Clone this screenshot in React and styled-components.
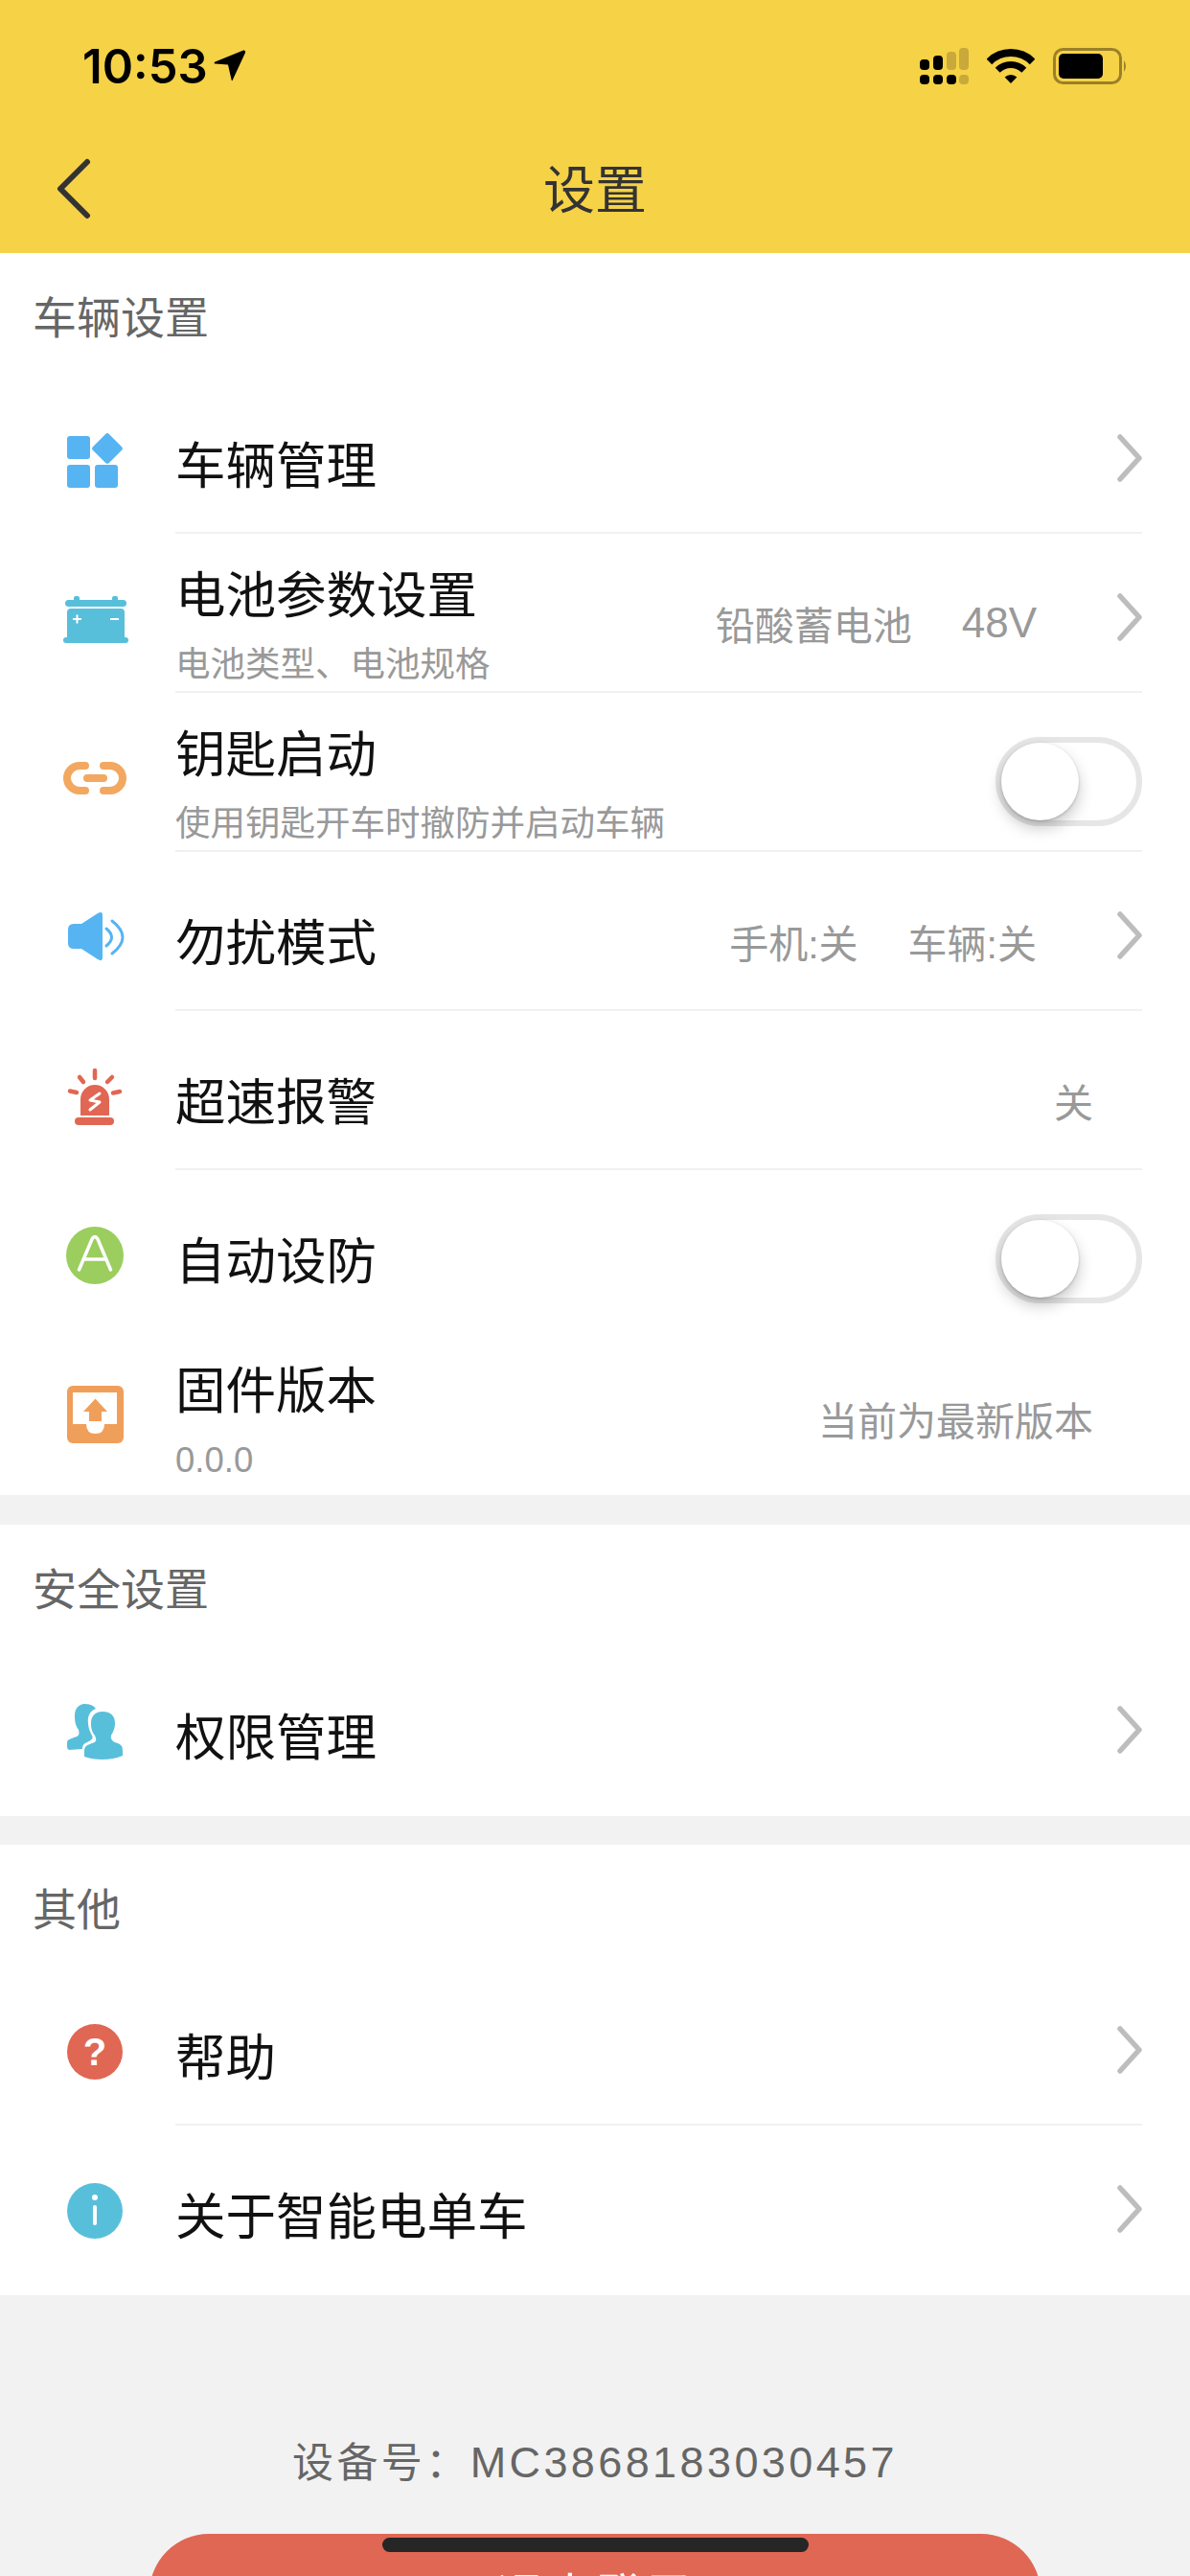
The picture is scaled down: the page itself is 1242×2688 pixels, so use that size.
import React from 'react';
import styled, { createGlobalStyle } from 'styled-components';

const GlobalStyle = createGlobalStyle`
  html, body {
    margin: 0;
    padding: 0;
    background: #f2f2f2;
  }
  * {
    box-sizing: border-box;
  }
`;

const Page = styled.div`
  position: relative;
  width: 1242px;
  height: 2688px;
  overflow: hidden;
  background: #f2f2f2;
  font-family: "Liberation Sans", "Noto Sans CJK SC", sans-serif;
`;

const Header = styled.header`
  background: #f6d246;
`;

const StatusBar = styled.div`
  height: 138px;
  padding: 0 65px 0 86px;
  display: flex;
  align-items: center;
  justify-content: space-between;
`;

const Clock = styled.div`
  display: flex;
  align-items: center;
  gap: 6px;
  font-family: Inter, sans-serif;
  font-size: 49px;
  font-weight: 600;
  color: #000;
`;

const StatusIcons = styled.div`
  display: flex;
  align-items: center;
  gap: 19px;
`;

const NavBar = styled.div`
  position: relative;
  height: 126px;
  display: flex;
  align-items: center;
  justify-content: center;
`;

const BackButton = styled.button`
  position: absolute;
  left: 58px;
  top: 27px;
  padding: 0;
  border: 0;
  background: none;
  display: flex;
`;

const NavTitle = styled.h1`
  margin: 0 0 14px;
  font-size: 54px;
  font-weight: 400;
  color: #333;
`;

const Section = styled.section`
  background: #fff;
  padding-bottom: ${(p) => p.$bottom}px;
  margin-bottom: ${(p) => p.$gap || 0}px;
`;

const SectionTitle = styled.div`
  height: 127px;
  padding-left: 34px;
  display: flex;
  align-items: center;
  font-size: 46px;
  color: #666;
`;

const RowBox = styled.div`
  height: 166px;
  display: flex;
`;

const IconCell = styled.div`
  width: 183px;
  flex: none;
  padding: 12px 0 0 65px;
  display: flex;
  align-items: center;
`;

const Icon = styled.svg`
  width: 68px;
  height: 68px;
  overflow: visible;
  display: block;
`;

const Body = styled.div`
  flex: 1;
  margin-right: 50px;
  padding-top: 28px;
  display: flex;
  align-items: center;
  justify-content: space-between;
  border-bottom: 2px solid ${(p) => (p.$line ? '#f1f1f1' : 'transparent')};
`;

const Labels = styled.div`
  margin-top: ${(p) => (p.$double ? 10 : 0)}px;
`;

const Label = styled.div`
  font-size: 52.5px;
  line-height: 66px;
  color: #111;
`;

const SubLabel = styled.div`
  margin-top: 6px;
  font-size: 36.5px;
  line-height: 66px;
  color: #999;
`;

const Trailing = styled.div`
  display: flex;
  align-items: center;
  padding-right: ${(p) => (p.$plain ? 51 : 0)}px;
`;

const Value = styled.span`
  margin-bottom: 6px;
  font-size: ${(p) => (p.$latin ? 44 : 41)}px;
  color: #999;
  & + & {
    margin-left: 52px;
  }
`;

const ChevronIcon = styled.svg`
  width: 28px;
  height: 50px;
  margin: 0 0 18px 82px;
  display: block;
`;

const ToggleTrack = styled.div`
  width: 153px;
  height: 93px;
  margin-bottom: 8px;
  border: 6px solid #e6e6e6;
  border-radius: 47px;
  background: #fff;
  display: flex;
  align-items: center;
`;

const ToggleThumb = styled.div`
  width: 81px;
  height: 81px;
  border-radius: 50%;
  background: #fff;
  box-shadow: 0 8px 16px rgba(0, 0, 0, 0.22), 0 1px 3px rgba(0, 0, 0, 0.2);
`;

const DeviceNumber = styled.div`
  margin-top: 145px;
  height: 60px;
  line-height: 60px;
  text-align: center;
  font-size: 45px;
  letter-spacing: 3.4px;
  color: #666;
`;

const DevicePrefix = styled.span`
  font-size: 43px;
`;

const LogoutButton = styled.button`
  display: flex;
  align-items: center;
  justify-content: center;
  width: 930px;
  height: 124px;
  margin: 44px auto 0;
  border: 0;
  border-radius: 62px;
  background: #e06753;
  color: #fff;
  font-family: inherit;
  font-size: 52px;
`;

const HomeIndicator = styled.div`
  position: absolute;
  left: 399px;
  top: 2648px;
  width: 445px;
  height: 15px;
  border-radius: 8px;
  background: #262626;
`;

const Chevron = () => (
  <ChevronIcon viewBox="0 0 28 50" fill="none">
    <path d="M5 3 L25 25 L5 47" stroke="#bdbdbd" strokeWidth="5.5" strokeLinecap="round" strokeLinejoin="round" />
  </ChevronIcon>
);

const Toggle = () => (
  <ToggleTrack>
    <ToggleThumb />
  </ToggleTrack>
);

const Row = ({ icon, label, sub, line, children }) => (
  <RowBox>
    <IconCell>{icon}</IconCell>
    <Body $line={line}>
      <Labels $double={!!sub}>
        <Label>{label}</Label>
        {sub && <SubLabel>{sub}</SubLabel>}
      </Labels>
      {children}
    </Body>
  </RowBox>
);

const SignalIcon = () => (
  <svg width="51" height="38" viewBox="0 0 51 38">
    <g fill="#000">
      <rect x="0" y="12" width="10" height="11" rx="4" />
      <rect x="14" y="8" width="10" height="15" rx="4" />
      <rect x="0" y="28" width="10" height="10" rx="4" />
      <rect x="14" y="28" width="10" height="10" rx="4" />
      <rect x="28" y="28" width="10" height="10" rx="4" />
    </g>
    <g fill="#c9a93a">
      <rect x="28" y="4" width="10" height="19" rx="4" />
      <rect x="41" y="0" width="10" height="23" rx="4" />
      <rect x="41" y="28" width="10" height="10" rx="4" />
    </g>
  </svg>
);

const WifiIcon = () => (
  <svg width="50" height="38" viewBox="0 0 50 38" fill="none">
    <path d="M2.4 14.4 A32 32 0 0 1 47.6 14.4" stroke="#000" strokeWidth="8" />
    <path d="M11.2 23.2 A19.5 19.5 0 0 1 38.8 23.2" stroke="#000" strokeWidth="7" />
    <path d="M25 37 L18.6 30.6 A9 9 0 0 1 31.4 30.6 Z" fill="#000" />
  </svg>
);

const BatteryIcon = () => (
  <svg width="78" height="38" viewBox="0 0 78 38">
    <rect x="1.5" y="1.5" width="69" height="35" rx="9" fill="none" stroke="#9a8029" strokeWidth="3" />
    <rect x="6" y="6" width="46" height="26" rx="5" fill="#000" />
    <path d="M74 13 Q78 19 74 25 Z" fill="#9a8029" />
  </svg>
);

const ArrowIcon = () => (
  <svg width="34" height="34" viewBox="0 0 34 34">
    <path d="M31 0.5 Q33.5 0 33 3 L20 31 Q19 33.5 18.5 31 L15 15.5 L1.5 14.5 Q-0.5 14 1.5 12.5 Z" fill="#000" />
  </svg>
);

const GridIcon = () => (
  <Icon viewBox="0 0 68 68">
    <g fill="#56b4f2">
      <rect x="5" y="9" width="24" height="24" rx="3" />
      <rect x="5" y="39" width="24" height="24" rx="3" />
      <rect x="34" y="39" width="24" height="24" rx="3" />
      <rect x="35" y="10" width="24" height="24" rx="3" transform="rotate(45 47 22)" />
    </g>
  </Icon>
);

const BatteryRowIcon = () => (
  <Icon viewBox="0 0 68 68">
    <g fill="#58bfdb">
      <rect x="12" y="10" width="6" height="7" rx="2" />
      <rect x="52" y="10" width="6" height="7" rx="2" />
      <rect x="3" y="14" width="64" height="7" rx="3.5" />
      <rect x="5" y="23" width="60" height="34" rx="4" />
      <rect x="1" y="53" width="68" height="6" rx="3" />
    </g>
    <path d="M11 34 H20 M15.5 29.5 V38.5 M50 34 H59" stroke="#fff" strokeWidth="2" />
  </Icon>
);

const LinkIcon = () => (
  <Icon viewBox="0 0 68 68" fill="none">
    <g stroke="#f2a860" strokeWidth="8" strokeLinecap="round">
      <path d="M24 21 H18 A13 13 0 0 0 18 47 H24" />
      <path d="M43 21 H50 A13 13 0 0 1 50 47 H43" />
      <path d="M26 34 H43" />
    </g>
  </Icon>
);

const SpeakerIcon = () => (
  <Icon viewBox="0 0 68 68" fill="none">
    <path
      d="M12 21 H20 L37 10 Q42 7 42 12 V56 Q42 61 37 58 L20 47 H12 Q6 47 6 41 V27 Q6 21 12 21 Z"
      fill="#56b4f2"
      transform="translate(0 -1)"
    />
    <path d="M46 25 Q57 34 46 43 M52 17 Q74 34 52 51" stroke="#56b4f2" strokeWidth="3" strokeLinecap="round" />
  </Icon>
);

const AlarmIcon = () => (
  <Icon viewBox="0 0 68 68" fill="none">
    <path d="M19 54 V37 A15 15 0 0 1 49 37 V54 Z" fill="#e06753" />
    <rect x="13" y="56" width="41" height="8" rx="4" fill="#e06753" />
    <path
      d="M34 7 V15 M18 14 L22 19 M52 14 L47 19 M8 28.5 L15 30 M60 29 L53 30.5"
      stroke="#e06753"
      strokeWidth="4.5"
      strokeLinecap="round"
    />
    <path d="M39 31 L29 38 L39 40 L29 48" stroke="#fff" strokeWidth="3" strokeLinecap="round" strokeLinejoin="round" />
  </Icon>
);

const AutoIcon = () => (
  <Icon viewBox="0 0 68 68" fill="none">
    <circle cx="34" cy="34" r="30" fill="#9bce5e" />
    <path d="M17.5 49 L31 17 Q34 12 37 17 L50.5 49 M24 38 H44" stroke="#fff" strokeWidth="3.5" strokeLinecap="round" />
  </Icon>
);

const FirmwareIcon = () => (
  <Icon viewBox="0 0 68 68">
    <rect x="5" y="4" width="59" height="60" rx="6" fill="#f09f5b" />
    <path d="M11 11 H57 V44 H44 Q44 54 34.5 54 Q25 54 25 44 H11 Z" fill="#fff" />
    <path d="M34.5 17.5 L47 31 H41 V41 H28 V31 H22 Z" fill="#f09f5b" />
  </Icon>
);

const UsersIcon = () => (
  <Icon viewBox="0 0 68 68">
    <path
      d="M13 17 C13 9 18 5 24 5 C29 5 33 7 35 10 C29 12 26 18 27 25 C27 30 29 34 31 38 C33 41 30 43 26 45 C24 46 21 47 21 52 L7 53 Q5 52 5 50 V46 C5 42 8 42 12 40 C18 39 18 36 17 32 C14 28 13 24 13 17 Z"
      fill="#58bfdb"
    />
    <path
      d="M30 25 C30 17 35 13 42 13 C50 13 55 17 55 25 C55 31 53 34 51 38 C50 42 53 45 58 46 C62 48 63 49 63 55 V59 C52 64 34 64 23 60 V54 C23 49 26 48 31 46 C36 45 36 42 34 38 C31 34 30 31 30 25 Z"
      fill="#58bfdb"
      stroke="#fff"
      strokeWidth="2"
      paintOrder="stroke"
    />
  </Icon>
);

const HelpIcon = () => (
  <Icon viewBox="0 0 68 68">
    <circle cx="34" cy="34" r="29" fill="#e06753" />
    <text x="34" y="48" textAnchor="middle" fontFamily="Liberation Sans, sans-serif" fontWeight="700" fontSize="40" fill="#fff">
      ?
    </text>
  </Icon>
);

const InfoIcon = () => (
  <Icon viewBox="0 0 68 68">
    <circle cx="34" cy="34" r="29" fill="#58bfdb" />
    <circle cx="34" cy="20" r="3" fill="#fff" />
    <rect x="32" y="28" width="4" height="21" rx="2" fill="#fff" />
  </Icon>
);

const App = () => (
  <Page>
    <GlobalStyle />
    <Header>
      <StatusBar>
        <Clock>
          10:53
          <ArrowIcon />
        </Clock>
        <StatusIcons>
          <SignalIcon />
          <WifiIcon />
          <BatteryIcon />
        </StatusIcons>
      </StatusBar>
      <NavBar>
        <BackButton>
          <svg width="37" height="64" viewBox="0 0 37 64" fill="none">
            <path d="M33 4 L5 32 L33 60" stroke="#333" strokeWidth="6" strokeLinecap="round" strokeLinejoin="round" />
          </svg>
        </BackButton>
        <NavTitle>设置</NavTitle>
      </NavBar>
    </Header>

    <Section $bottom={7} $gap={31}>
      <SectionTitle>车辆设置</SectionTitle>
      <Row icon={<GridIcon />} label="车辆管理" line>
        <Trailing>
          <Chevron />
        </Trailing>
      </Row>
      <Row icon={<BatteryRowIcon />} label="电池参数设置" sub="电池类型、电池规格" line>
        <Trailing>
          <Value>铅酸蓄电池</Value>
          <Value $latin>48V</Value>
          <Chevron />
        </Trailing>
      </Row>
      <Row icon={<LinkIcon />} label="钥匙启动" sub="使用钥匙开车时撤防并启动车辆" line>
        <Toggle />
      </Row>
      <Row icon={<SpeakerIcon />} label="勿扰模式" line>
        <Trailing>
          <Value>手机:关</Value>
          <Value>车辆:关</Value>
          <Chevron />
        </Trailing>
      </Row>
      <Row icon={<AlarmIcon />} label="超速报警" line>
        <Trailing $plain>
          <Value>关</Value>
        </Trailing>
      </Row>
      <Row icon={<AutoIcon />} label="自动设防">
        <Toggle />
      </Row>
      <Row icon={<FirmwareIcon />} label="固件版本" sub="0.0.0">
        <Trailing $plain>
          <Value>当前为最新版本</Value>
        </Trailing>
      </Row>
    </Section>

    <Section $bottom={11} $gap={30}>
      <SectionTitle>安全设置</SectionTitle>
      <Row icon={<UsersIcon />} label="权限管理">
        <Trailing>
          <Chevron />
        </Trailing>
      </Row>
    </Section>

    <Section $bottom={11}>
      <SectionTitle>其他</SectionTitle>
      <Row icon={<HelpIcon />} label="帮助" line>
        <Trailing>
          <Chevron />
        </Trailing>
      </Row>
      <Row icon={<InfoIcon />} label="关于智能电单车">
        <Trailing>
          <Chevron />
        </Trailing>
      </Row>
    </Section>

    <DeviceNumber>
      <DevicePrefix>设备号：</DevicePrefix>MC3868183030457
    </DeviceNumber>
    <LogoutButton>退出登录</LogoutButton>
    <HomeIndicator />
  </Page>
);

export default App;
